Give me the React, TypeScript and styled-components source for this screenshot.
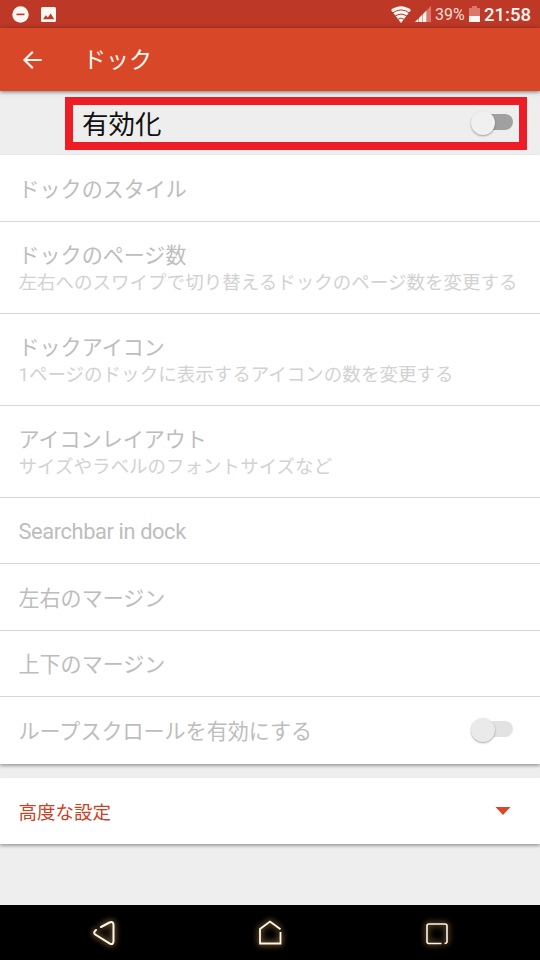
import React from "react";
import styled, { createGlobalStyle } from "styled-components";

const GlobalStyle = createGlobalStyle`
  * { box-sizing: border-box; }
  body {
    margin: 0;
    background: #eeeeee;
    font-family: Roboto, "Noto Sans CJK JP", sans-serif;
  }
`;

const Screen = styled.div`
  width: 540px;
  height: 960px;
  display: flex;
  flex-direction: column;
  overflow: hidden;
  background: #eeeeee;
`;

const StatusBar = styled.header`
  height: 28px;
  flex: none;
  display: flex;
  align-items: center;
  justify-content: space-between;
  padding: 0 9px 0 12px;
  background: #bd3826;
  color: #fff7f2;
`;

const StatusGroup = styled.div<{ $gap: number }>`
  display: flex;
  align-items: center;
  gap: ${(p) => p.$gap}px;
`;

const Battery = styled.span`
  width: 30px;
  padding-top: 1px;
  font-size: 16px;
  line-height: 27px;
  color: #f9dfd9;
`;

const Clock = styled.span`
  width: 47px;
  padding-top: 2px;
  font-size: 18.5px;
  font-weight: 500;
  line-height: 26px;
  white-space: nowrap;
`;

const Toolbar = styled.div`
  height: 63px;
  flex: none;
  display: flex;
  align-items: center;
  gap: 37px;
  padding: 1px 0 0 20px;
  background: #d84727;
  color: #fff8f2;
  box-shadow: 0 1px 4px rgba(0, 0, 0, 0.5);
  z-index: 1;
`;

const Title = styled.h1`
  margin: 0;
  padding-top: 2px;
  font-size: 23px;
  font-weight: 400;
  line-height: 34px;
`;

const EnableBand = styled.section`
  height: 64px;
  flex: none;
  padding: 6px 13px 5px 65px;
`;

const EnableRow = styled.div`
  height: 53px;
  display: flex;
  align-items: center;
  justify-content: space-between;
  padding: 0 6px 0 9px;
  border: 8px solid #ee1c25;
  color: #111;
  font-size: 26.5px;
  line-height: 36px;
`;

const EnableLabel = styled.span`
  padding-top: 2px;
`;

const Card = styled.section`
  flex: none;
  background: #fff;
  box-shadow: 0 2px 3px rgba(0, 0, 0, 0.32);
`;

const SettingRow = styled.div<{ $height: number; $last?: boolean }>`
  height: ${(p) => p.$height}px;
  display: flex;
  align-items: center;
  justify-content: space-between;
  padding: 0 27px 0 18.5px;
  border-bottom: ${(p) => (p.$last ? "none" : "1px solid #d6d6d6")};
`;

const RowText = styled.div<{ $latin?: boolean }>`
  padding-top: 3px;
  font-size: ${(p) => (p.$latin ? 21.8 : 21.05)}px;
  letter-spacing: ${(p) => (p.$latin ? "-0.38px" : "normal")};
`;

const RowTitle = styled.div`
  line-height: 28px;
  color: #bdbdbd;
  white-space: nowrap;
`;

const RowSummary = styled.div`
  font-size: 18.53px;
  line-height: 26px;
  color: #d2d2d2;
  white-space: nowrap;
`;

const AdvancedCard = styled(Card)`
  height: 66px;
  margin-top: 14px;
  display: flex;
  align-items: center;
  justify-content: space-between;
  padding: 0 29px 0 18.5px;
  color: #cc4123;
  font-size: 18.5px;
`;

const AdvancedLabel = styled.span`
  padding-bottom: 1px;
`;

const NavBar = styled.nav`
  height: 55px;
  margin-top: auto;
  flex: none;
  display: flex;
  align-items: center;
  justify-content: space-between;
  padding: 3px 81px 0;
  background: #000;
`;

const NavIcon = styled.svg`
  filter: drop-shadow(0 0 3px #9b794a) drop-shadow(0 0 2px #4c3820);
`;

const Track = styled.div<{ $faded?: boolean }>`
  width: 40px;
  height: 16px;
  flex: none;
  display: flex;
  align-items: center;
  margin-bottom: 3px;
  border-radius: 8px;
  background: ${(p) => (p.$faded ? "#e2e2e2" : "#a0a0a0")};
`;

const Thumb = styled.div<{ $faded?: boolean }>`
  width: 24px;
  height: 24px;
  flex: none;
  margin: 2px 0 0 -2px;
  border-radius: 50%;
  background: ${(p) => (p.$faded ? "#eaeaea" : "#f0f0f0")};
  box-shadow: 0 1px 2px rgba(0, 0, 0, 0.34);
`;

function Toggle({ faded }: { faded?: boolean }) {
  return (
    <Track $faded={faded} role="switch" aria-checked={false}>
      <Thumb $faded={faded} />
    </Track>
  );
}

type Setting = { title: string; summary?: string; height: number; toggle?: boolean; latin?: boolean };

const settings: Setting[] = [
  { title: "ドックのスタイル", height: 67 },
  { title: "ドックのページ数", summary: "左右へのスワイプで切り替えるドックのページ数を変更する", height: 92 },
  { title: "ドックアイコン", summary: "1ページのドックに表示するアイコンの数を変更する", height: 92 },
  { title: "アイコンレイアウト", summary: "サイズやラベルのフォントサイズなど", height: 92 },
  { title: "Searchbar in dock", height: 66, latin: true },
  { title: "左右のマージン", height: 67 },
  { title: "上下のマージン", height: 66 },
  { title: "ループスクロールを有効にする", height: 67, toggle: true },
];

export default function App() {
  return (
    <Screen>
      <GlobalStyle />
      <StatusBar>
        <StatusGroup $gap={11}>
          <svg width="17" height="17" viewBox="0 0 17 17">
            <circle cx="8.5" cy="8.5" r="8.2" fill="currentColor" />
            <rect x="4.5" y="7.6" width="8" height="1.6" fill="#bd3826" />
          </svg>
          <svg width="17" height="17" viewBox="0 0 17 17">
            <rect x="1" y="1" width="15" height="15" rx="1.5" fill="currentColor" />
            <path d="M3 13.2 5.8 9.3 7.8 11.6 10.7 7.5 14.2 13.2Z" fill="#bd3826" />
          </svg>
        </StatusGroup>
        <StatusGroup $gap={4}>
          <svg width="20" height="17" viewBox="0 0 20 17">
            <path d="M0 4Q10-3.5 20 4L10 17Z" fill="currentColor" />
            <path d="M1.3 7.1Q10 .7 18.7 7.1M4 10.3Q10 5.9 16 10.3M6.5 13.4Q10 10.7 13.5 13.4" fill="none" stroke="#bd3826" strokeWidth="1" />
          </svg>
          <svg width="16" height="16" viewBox="0 0 16 16">
            <path d="M0 16 16 0V16Z" fill="#d9786b" />
            <path d="M0 16 3.3 12.7V16ZM4 12 7.3 8.7V16H4ZM8 8 11.3 4.7V16H8Z" fill="currentColor" />
          </svg>
          <Battery>39%</Battery>
          <svg width="11" height="16" viewBox="0 0 11 16">
            <path d="M0 2H3V0H8V2H11V10H0Z" fill="#d9786b" />
            <path d="M0 10H11V16H0Z" fill="currentColor" />
          </svg>
          <Clock>21:58</Clock>
        </StatusGroup>
      </StatusBar>
      <Toolbar>
        <svg width="26" height="24" viewBox="0 0 26 24" fill="none" stroke="currentColor" strokeWidth="2.2">
          <path d="M21.7 12H4.5M12.8 3.7 4.5 12 12.8 20.3" />
        </svg>
        <Title>ドック</Title>
      </Toolbar>
      <EnableBand>
        <EnableRow>
          <EnableLabel>有効化</EnableLabel>
          <Toggle />
        </EnableRow>
      </EnableBand>
      <Card>
        {settings.map((s, i) => (
          <SettingRow key={s.title} $height={s.height} $last={i === settings.length - 1}>
            <RowText $latin={s.latin}>
              <RowTitle>{s.title}</RowTitle>
              {s.summary && <RowSummary>{s.summary}</RowSummary>}
            </RowText>
            {s.toggle && <Toggle faded />}
          </SettingRow>
        ))}
      </Card>
      <AdvancedCard>
        <AdvancedLabel>高度な設定</AdvancedLabel>
        <svg width="16" height="8" viewBox="0 0 16 8">
          <path d="M.5 0H15.5L8 8Z" fill="#d84727" />
        </svg>
      </AdvancedCard>
      <NavBar>
        <NavIcon width="44" height="40" viewBox="0 0 44 40" fill="none" stroke="#fff7e9" strokeWidth="2" strokeLinecap="round" strokeLinejoin="round">
          <path d="M20 13 28.5 8.5Q32.5 7 32.5 11V27Q32.5 31.5 28.5 29.3L14.2 20.5Q11.8 18.7 15 16" />
        </NavIcon>
        <NavIcon width="44" height="40" viewBox="0 0 44 40" fill="none" stroke="#fff7e9" strokeWidth="1.8">
          <path d="M32.5 15.3 22 7.5 12 15V29.5H32.5V18" />
        </NavIcon>
        <NavIcon width="44" height="40" viewBox="0 0 44 40" fill="none" stroke="#fff7e9" strokeWidth="1.6">
          <path d="M26.5 29.5H14Q12 29.5 12 27.5V12Q12 10 14 10H30Q32 10 32 12V27.5Q32 29.5 29.5 29.5" />
        </NavIcon>
      </NavBar>
    </Screen>
  );
}
